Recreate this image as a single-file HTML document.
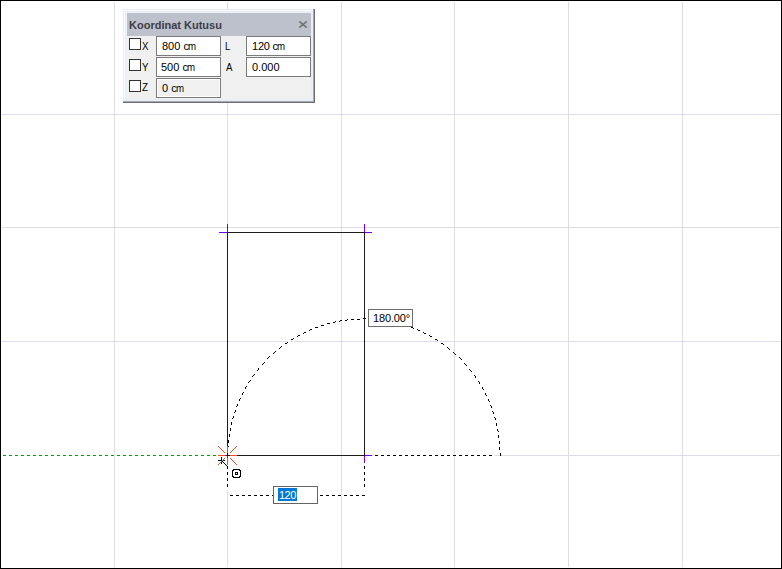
<!DOCTYPE html>
<html><head><meta charset="utf-8">
<style>
html,body{margin:0;padding:0;background:#fff;}
body{width:782px;height:569px;position:relative;overflow:hidden;font-family:"Liberation Sans",sans-serif;}
#cv{position:absolute;left:0;top:0;}
.dlg{position:absolute;left:123px;top:9px;width:192px;height:94px;}
.abs{position:absolute;}
.t{position:absolute;font-size:11px;line-height:11px;color:#000;white-space:nowrap;}
.tb{position:absolute;box-sizing:border-box;border:1px solid #7a7a7a;background:#fff;}
.m{display:inline-block;transform:scaleX(0.88);transform-origin:0 50%;}
.cb{position:absolute;box-sizing:border-box;width:12px;height:12px;border:1px solid #333;background:#fff;}
</style></head>
<body>
<svg id="cv" width="782" height="569" viewBox="0 0 782 569" shape-rendering="crispEdges">
<rect x="0" y="0" width="782" height="569" fill="#fff"/>
<path fill="#dcdceb" d="M114 2h1v565h-1zM227 2h1v565h-1zM341 2h1v565h-1zM454 2h1v565h-1zM568 2h1v565h-1zM682 2h1v565h-1zM2 114h778v1h-778zM2 227h778v1h-778zM2 341h778v1h-778zM2 455h778v1h-778z"/>
<path fill="#fff" d="M2 455h216v1h-216z"/>
<path fill="#00a000" d="M3 455h3v1h-3zM9 455h3v1h-3zM15 455h3v1h-3zM21 455h3v1h-3zM27 455h3v1h-3zM33 455h3v1h-3zM39 455h3v1h-3zM45 455h3v1h-3zM51 455h3v1h-3zM57 455h3v1h-3zM63 455h3v1h-3zM69 455h3v1h-3zM75 455h3v1h-3zM81 455h3v1h-3zM87 455h3v1h-3zM93 455h3v1h-3zM99 455h3v1h-3zM105 455h3v1h-3zM111 455h3v1h-3zM117 455h3v1h-3zM123 455h3v1h-3zM129 455h3v1h-3zM135 455h3v1h-3zM141 455h3v1h-3zM147 455h3v1h-3zM153 455h3v1h-3zM159 455h3v1h-3zM165 455h3v1h-3zM171 455h3v1h-3zM177 455h3v1h-3zM183 455h3v1h-3zM189 455h3v1h-3zM195 455h3v1h-3zM201 455h3v1h-3zM207 455h3v1h-3zM213 455h3v1h-3z"/>
<path fill="#fff" d="M500 455h1v1h-1zM500 454h1v1h-1zM500 453h1v1h-1zM500 452h1v1h-1zM500 451h1v1h-1zM499 450h1v1h-1zM499 449h1v1h-1zM499 448h1v1h-1zM499 447h1v1h-1zM499 446h1v1h-1zM499 445h1v1h-1zM499 444h1v1h-1zM499 443h1v1h-1zM499 442h1v1h-1zM499 441h1v1h-1zM499 440h1v1h-1zM499 439h1v1h-1zM499 438h1v1h-1zM498 437h1v1h-1zM498 436h1v1h-1zM498 435h1v1h-1zM498 434h1v1h-1zM498 433h1v1h-1zM498 432h1v1h-1zM498 431h1v1h-1zM497 430h1v1h-1zM497 429h1v1h-1zM497 428h1v1h-1zM497 427h1v1h-1zM497 426h1v1h-1zM496 425h1v1h-1zM496 424h1v1h-1zM496 423h1v1h-1zM496 422h1v1h-1zM495 421h1v1h-1zM495 420h1v1h-1zM495 419h1v1h-1zM495 418h1v1h-1zM494 417h1v1h-1zM494 416h1v1h-1zM494 415h1v1h-1zM493 414h1v1h-1zM493 413h1v1h-1zM493 412h1v1h-1zM492 411h1v1h-1zM492 410h1v1h-1zM492 409h1v1h-1zM491 408h1v1h-1zM491 407h1v1h-1zM491 406h1v1h-1zM490 405h1v1h-1zM490 404h1v1h-1zM489 403h1v1h-1zM489 402h1v1h-1zM489 401h1v1h-1zM488 400h1v1h-1zM488 399h1v1h-1zM487 398h1v1h-1zM487 397h1v1h-1zM486 396h1v1h-1zM486 395h1v1h-1zM485 394h1v1h-1zM485 393h1v1h-1zM484 392h1v1h-1zM484 391h1v1h-1zM483 390h1v1h-1zM483 389h1v1h-1zM482 388h1v1h-1zM482 387h1v1h-1zM481 386h1v1h-1zM481 385h1v1h-1zM480 384h1v1h-1zM479 383h1v1h-1zM479 382h1v1h-1zM478 381h1v1h-1zM477 380h1v1h-1zM477 379h1v1h-1zM476 378h1v1h-1zM475 377h1v1h-1zM475 376h1v1h-1zM474 375h1v1h-1zM473 374h1v1h-1zM473 373h1v1h-1zM472 372h1v1h-1zM471 371h1v1h-1zM470 370h1v1h-1zM469 369h1v1h-1zM469 368h1v1h-1zM468 367h1v1h-1zM467 366h1v1h-1zM466 365h1v1h-1zM465 364h1v1h-1zM464 363h1v1h-1zM463 362h1v1h-1zM463 361h1v1h-1zM462 360h1v1h-1zM461 359h1v1h-1zM460 358h1v1h-1zM459 357h1v1h-1zM458 356h1v1h-1zM457 355h1v1h-1zM456 355h1v1h-1zM455 354h1v1h-1zM454 353h1v1h-1zM453 352h1v1h-1zM452 351h1v1h-1zM451 350h1v1h-1zM450 349h1v1h-1zM449 349h1v1h-1zM448 348h1v1h-1zM447 347h1v1h-1zM446 346h1v1h-1zM445 345h1v1h-1zM444 345h1v1h-1zM443 344h1v1h-1zM442 343h1v1h-1zM441 343h1v1h-1zM440 342h1v1h-1zM439 341h1v1h-1zM438 341h1v1h-1zM437 340h1v1h-1zM436 339h1v1h-1zM435 339h1v1h-1zM434 338h1v1h-1zM433 337h1v1h-1zM432 337h1v1h-1zM431 336h1v1h-1zM430 336h1v1h-1zM429 335h1v1h-1zM428 335h1v1h-1zM427 334h1v1h-1zM426 334h1v1h-1zM425 333h1v1h-1zM424 333h1v1h-1zM423 332h1v1h-1zM422 332h1v1h-1zM421 331h1v1h-1zM420 331h1v1h-1zM419 330h1v1h-1zM418 330h1v1h-1zM417 329h1v1h-1zM416 329h1v1h-1zM415 329h1v1h-1zM414 328h1v1h-1zM413 328h1v1h-1zM412 327h1v1h-1zM411 327h1v1h-1zM410 327h1v1h-1zM409 326h1v1h-1zM408 326h1v1h-1zM407 326h1v1h-1zM406 325h1v1h-1zM405 325h1v1h-1zM404 325h1v1h-1zM403 324h1v1h-1zM402 324h1v1h-1zM401 324h1v1h-1zM400 323h1v1h-1zM399 323h1v1h-1zM398 323h1v1h-1zM397 323h1v1h-1zM396 322h1v1h-1zM395 322h1v1h-1zM394 322h1v1h-1zM393 322h1v1h-1zM392 321h1v1h-1zM391 321h1v1h-1zM390 321h1v1h-1zM389 321h1v1h-1zM388 321h1v1h-1zM387 320h1v1h-1zM386 320h1v1h-1zM385 320h1v1h-1zM384 320h1v1h-1zM383 320h1v1h-1zM382 320h1v1h-1zM381 320h1v1h-1zM380 319h1v1h-1zM379 319h1v1h-1zM378 319h1v1h-1zM377 319h1v1h-1zM376 319h1v1h-1zM375 319h1v1h-1zM374 319h1v1h-1zM373 319h1v1h-1zM372 319h1v1h-1zM371 319h1v1h-1zM370 319h1v1h-1zM369 319h1v1h-1zM368 319h1v1h-1zM367 318h1v1h-1zM366 318h1v1h-1zM365 318h1v1h-1zM364 318h1v1h-1zM363 318h1v1h-1zM362 318h1v1h-1zM361 318h1v1h-1zM360 318h1v1h-1zM359 319h1v1h-1zM358 319h1v1h-1zM357 319h1v1h-1zM356 319h1v1h-1zM355 319h1v1h-1zM354 319h1v1h-1zM353 319h1v1h-1zM352 319h1v1h-1zM351 319h1v1h-1zM350 319h1v1h-1zM349 319h1v1h-1zM348 319h1v1h-1zM347 319h1v1h-1zM346 320h1v1h-1zM345 320h1v1h-1zM344 320h1v1h-1zM343 320h1v1h-1zM342 320h1v1h-1zM341 320h1v1h-1zM340 320h1v1h-1zM339 321h1v1h-1zM338 321h1v1h-1zM337 321h1v1h-1zM336 321h1v1h-1zM335 321h1v1h-1zM334 322h1v1h-1zM333 322h1v1h-1zM332 322h1v1h-1zM331 322h1v1h-1zM330 323h1v1h-1zM329 323h1v1h-1zM328 323h1v1h-1zM327 323h1v1h-1zM326 324h1v1h-1zM325 324h1v1h-1zM324 324h1v1h-1zM323 325h1v1h-1zM322 325h1v1h-1zM321 325h1v1h-1zM320 326h1v1h-1zM319 326h1v1h-1zM318 326h1v1h-1zM317 327h1v1h-1zM316 327h1v1h-1zM315 327h1v1h-1zM314 328h1v1h-1zM313 328h1v1h-1zM312 329h1v1h-1zM311 329h1v1h-1zM310 329h1v1h-1zM309 330h1v1h-1zM308 330h1v1h-1zM307 331h1v1h-1zM306 331h1v1h-1zM305 332h1v1h-1zM304 332h1v1h-1zM303 333h1v1h-1zM302 333h1v1h-1zM301 334h1v1h-1zM300 334h1v1h-1zM299 335h1v1h-1zM298 335h1v1h-1zM297 336h1v1h-1zM296 336h1v1h-1zM295 337h1v1h-1zM294 337h1v1h-1zM293 338h1v1h-1zM292 339h1v1h-1zM291 339h1v1h-1zM290 340h1v1h-1zM289 341h1v1h-1zM288 341h1v1h-1zM287 342h1v1h-1zM286 343h1v1h-1zM285 343h1v1h-1zM284 344h1v1h-1zM283 345h1v1h-1zM282 345h1v1h-1zM281 346h1v1h-1zM280 347h1v1h-1zM279 348h1v1h-1zM278 349h1v1h-1zM277 349h1v1h-1zM276 350h1v1h-1zM275 351h1v1h-1zM274 352h1v1h-1zM273 353h1v1h-1zM272 354h1v1h-1zM271 355h1v1h-1zM270 355h1v1h-1zM269 356h1v1h-1zM268 357h1v1h-1zM267 358h1v1h-1zM266 359h1v1h-1zM265 360h1v1h-1zM264 361h1v1h-1zM264 362h1v1h-1zM263 363h1v1h-1zM262 364h1v1h-1zM261 365h1v1h-1zM260 366h1v1h-1zM259 367h1v1h-1zM258 368h1v1h-1zM258 369h1v1h-1zM257 370h1v1h-1zM256 371h1v1h-1zM255 372h1v1h-1zM254 373h1v1h-1zM254 374h1v1h-1zM253 375h1v1h-1zM252 376h1v1h-1zM252 377h1v1h-1zM251 378h1v1h-1zM250 379h1v1h-1zM250 380h1v1h-1zM249 381h1v1h-1zM248 382h1v1h-1zM248 383h1v1h-1zM247 384h1v1h-1zM246 385h1v1h-1zM246 386h1v1h-1zM245 387h1v1h-1zM245 388h1v1h-1zM244 389h1v1h-1zM244 390h1v1h-1zM243 391h1v1h-1zM243 392h1v1h-1zM242 393h1v1h-1zM242 394h1v1h-1zM241 395h1v1h-1zM241 396h1v1h-1zM240 397h1v1h-1zM240 398h1v1h-1zM239 399h1v1h-1zM239 400h1v1h-1zM238 401h1v1h-1zM238 402h1v1h-1zM238 403h1v1h-1zM237 404h1v1h-1zM237 405h1v1h-1zM236 406h1v1h-1zM236 407h1v1h-1zM236 408h1v1h-1zM235 409h1v1h-1zM235 410h1v1h-1zM235 411h1v1h-1zM234 412h1v1h-1zM234 413h1v1h-1zM234 414h1v1h-1zM233 415h1v1h-1zM233 416h1v1h-1zM233 417h1v1h-1zM232 418h1v1h-1zM232 419h1v1h-1zM232 420h1v1h-1zM232 421h1v1h-1zM231 422h1v1h-1zM231 423h1v1h-1zM231 424h1v1h-1zM231 425h1v1h-1zM230 426h1v1h-1zM230 427h1v1h-1zM230 428h1v1h-1zM230 429h1v1h-1zM230 430h1v1h-1zM229 431h1v1h-1zM229 432h1v1h-1zM229 433h1v1h-1zM229 434h1v1h-1zM229 435h1v1h-1zM229 436h1v1h-1zM229 437h1v1h-1zM228 438h1v1h-1zM228 439h1v1h-1zM228 440h1v1h-1zM228 441h1v1h-1zM228 442h1v1h-1zM228 443h1v1h-1zM228 444h1v1h-1zM228 445h1v1h-1zM228 446h1v1h-1z"/>
<path fill="#000" d="M500 455h1v1h-1zM500 454h1v1h-1zM500 453h1v1h-1zM499 449h1v1h-1zM499 448h1v1h-1zM499 447h1v1h-1zM499 443h1v1h-1zM499 442h1v1h-1zM499 441h1v1h-1zM498 437h1v1h-1zM498 436h1v1h-1zM498 435h1v1h-1zM498 431h1v1h-1zM497 430h1v1h-1zM497 429h1v1h-1zM496 425h1v1h-1zM496 424h1v1h-1zM496 423h1v1h-1zM495 419h1v1h-1zM495 418h1v1h-1zM494 417h1v1h-1zM493 413h1v1h-1zM493 412h1v1h-1zM492 411h1v1h-1zM491 407h1v1h-1zM491 406h1v1h-1zM490 405h1v1h-1zM489 401h1v1h-1zM488 400h1v1h-1zM488 399h1v1h-1zM486 395h1v1h-1zM485 394h1v1h-1zM485 393h1v1h-1zM483 389h1v1h-1zM482 388h1v1h-1zM482 387h1v1h-1zM479 383h1v1h-1zM479 382h1v1h-1zM478 381h1v1h-1zM475 377h1v1h-1zM475 376h1v1h-1zM474 375h1v1h-1zM471 371h1v1h-1zM470 370h1v1h-1zM469 369h1v1h-1zM466 365h1v1h-1zM465 364h1v1h-1zM464 363h1v1h-1zM461 359h1v1h-1zM460 358h1v1h-1zM459 357h1v1h-1zM455 354h1v1h-1zM454 353h1v1h-1zM453 352h1v1h-1zM449 349h1v1h-1zM448 348h1v1h-1zM447 347h1v1h-1zM443 344h1v1h-1zM442 343h1v1h-1zM441 343h1v1h-1zM437 340h1v1h-1zM436 339h1v1h-1zM435 339h1v1h-1zM431 336h1v1h-1zM430 336h1v1h-1zM429 335h1v1h-1zM425 333h1v1h-1zM424 333h1v1h-1zM423 332h1v1h-1zM419 330h1v1h-1zM418 330h1v1h-1zM417 329h1v1h-1zM413 328h1v1h-1zM412 327h1v1h-1zM411 327h1v1h-1zM407 326h1v1h-1zM406 325h1v1h-1zM405 325h1v1h-1zM401 324h1v1h-1zM400 323h1v1h-1zM399 323h1v1h-1zM395 322h1v1h-1zM394 322h1v1h-1zM393 322h1v1h-1zM389 321h1v1h-1zM388 321h1v1h-1zM387 320h1v1h-1zM383 320h1v1h-1zM382 320h1v1h-1zM381 320h1v1h-1zM377 319h1v1h-1zM376 319h1v1h-1zM375 319h1v1h-1zM371 319h1v1h-1zM370 319h1v1h-1zM369 319h1v1h-1zM365 318h1v1h-1zM364 318h1v1h-1zM363 318h1v1h-1zM359 319h1v1h-1zM358 319h1v1h-1zM357 319h1v1h-1zM353 319h1v1h-1zM352 319h1v1h-1zM351 319h1v1h-1zM347 319h1v1h-1zM346 320h1v1h-1zM345 320h1v1h-1zM341 320h1v1h-1zM340 320h1v1h-1zM339 321h1v1h-1zM335 321h1v1h-1zM334 322h1v1h-1zM333 322h1v1h-1zM329 323h1v1h-1zM328 323h1v1h-1zM327 323h1v1h-1zM323 325h1v1h-1zM322 325h1v1h-1zM321 325h1v1h-1zM317 327h1v1h-1zM316 327h1v1h-1zM315 327h1v1h-1zM311 329h1v1h-1zM310 329h1v1h-1zM309 330h1v1h-1zM305 332h1v1h-1zM304 332h1v1h-1zM303 333h1v1h-1zM299 335h1v1h-1zM298 335h1v1h-1zM297 336h1v1h-1zM293 338h1v1h-1zM292 339h1v1h-1zM291 339h1v1h-1zM287 342h1v1h-1zM286 343h1v1h-1zM285 343h1v1h-1zM281 346h1v1h-1zM280 347h1v1h-1zM279 348h1v1h-1zM275 351h1v1h-1zM274 352h1v1h-1zM273 353h1v1h-1zM269 356h1v1h-1zM268 357h1v1h-1zM267 358h1v1h-1zM264 362h1v1h-1zM263 363h1v1h-1zM262 364h1v1h-1zM258 368h1v1h-1zM258 369h1v1h-1zM257 370h1v1h-1zM254 374h1v1h-1zM253 375h1v1h-1zM252 376h1v1h-1zM250 380h1v1h-1zM249 381h1v1h-1zM248 382h1v1h-1zM246 386h1v1h-1zM245 387h1v1h-1zM245 388h1v1h-1zM243 392h1v1h-1zM242 393h1v1h-1zM242 394h1v1h-1zM240 398h1v1h-1zM239 399h1v1h-1zM239 400h1v1h-1zM237 404h1v1h-1zM237 405h1v1h-1zM236 406h1v1h-1zM235 410h1v1h-1zM235 411h1v1h-1zM234 412h1v1h-1zM233 416h1v1h-1zM233 417h1v1h-1zM232 418h1v1h-1zM231 422h1v1h-1zM231 423h1v1h-1zM231 424h1v1h-1zM230 428h1v1h-1zM230 429h1v1h-1zM230 430h1v1h-1zM229 434h1v1h-1zM229 435h1v1h-1zM229 436h1v1h-1zM228 440h1v1h-1zM228 441h1v1h-1zM228 442h1v1h-1zM228 446h1v1h-1z"/>
<path fill="#fff" d="M373 455h122v1h-122z"/>
<path fill="#000" d="M375 455h3v1h-3zM381 455h3v1h-3zM387 455h3v1h-3zM393 455h3v1h-3zM399 455h3v1h-3zM405 455h3v1h-3zM411 455h3v1h-3zM417 455h3v1h-3zM423 455h3v1h-3zM429 455h3v1h-3zM435 455h3v1h-3zM441 455h3v1h-3zM447 455h3v1h-3zM453 455h3v1h-3zM459 455h3v1h-3zM465 455h3v1h-3zM471 455h3v1h-3zM477 455h3v1h-3zM483 455h3v1h-3zM489 455h3v1h-3z"/>
<path fill="#1c1c1c" d="M227 232h138v1h-138zM227 455h138v1h-138zM227 232h1v224h-1zM364 232h1v224h-1z"/>
<path fill="#fff" d="M227 456h1v34h-1z"/>
<path fill="#000" d="M227 456h1v1h-1zM227 460h1v3h-1zM227 466h1v3h-1zM227 472h1v3h-1zM227 478h1v3h-1zM227 484h1v3h-1z"/>
<path fill="#fff" d="M364 456h1v34h-1z"/>
<path fill="#000" d="M364 456h1v1h-1zM364 460h1v3h-1zM364 466h1v3h-1zM364 472h1v3h-1zM364 478h1v3h-1zM364 484h1v3h-1z"/>
<path fill="#fff" d="M230 495h43v1h-43z"/>
<path fill="#000" d="M230 495h3v1h-3zM236 495h3v1h-3zM242 495h3v1h-3zM248 495h3v1h-3zM254 495h3v1h-3zM260 495h3v1h-3zM266 495h3v1h-3zM272 495h1v1h-1z"/>
<path fill="#fff" d="M318 495h48v1h-48z"/>
<path fill="#000" d="M320 495h3v1h-3zM326 495h3v1h-3zM332 495h3v1h-3zM338 495h3v1h-3zM344 495h3v1h-3zM350 495h3v1h-3zM356 495h3v1h-3zM362 495h3v1h-3z"/>
<path fill="#7800f0" d="M227 224h1v8h-1zM219 232h8v1h-8zM364 224h1v8h-1zM365 232h7v1h-7zM365 455h7v1h-7zM364 456h1v7h-1zM219 455h8v1h-8zM227 456h1v8h-1z"/>
<path fill="#f0501e" d="M218 455h7v1h-7zM230 455h7v1h-7zM227 446h1v7h-1zM227 458h1v7h-1zM218 446h1v1h-1zM236 446h1v1h-1zM230 458h1v1h-1zM224 458h1v1h-1zM219 447h1v1h-1zM235 447h1v1h-1zM231 459h1v1h-1zM223 459h1v1h-1zM220 448h1v1h-1zM234 448h1v1h-1zM232 460h1v1h-1zM222 460h1v1h-1zM221 449h1v1h-1zM233 449h1v1h-1zM233 461h1v1h-1zM221 461h1v1h-1zM222 450h1v1h-1zM232 450h1v1h-1zM234 462h1v1h-1zM220 462h1v1h-1zM223 451h1v1h-1zM231 451h1v1h-1zM235 463h1v1h-1zM219 463h1v1h-1zM224 452h1v1h-1zM230 452h1v1h-1zM236 464h1v1h-1zM218 464h1v1h-1z"/>
<path fill="#000" d="M227 455h1v1h-1zM228 455h1v1h-1zM229 455h1v1h-1zM227 453h1v1h-1zM227 454h1v1h-1zM218 460h7v1h-7zM221 457h1v7h-1z"/>
<path fill="#00c8ff" d="M222 460h1v1h-1zM221 461h1v1h-1z"/>
<path fill="#000" d="M222 461h1v1h-1zM223 462h1v1h-1zM224 463h1v1h-1zM225 464h1v1h-1zM226 465h1v1h-1zM227 466h1v1h-1zM233 469h7v1h-7zM233 477h7v1h-7zM232 470h1v7h-1zM240 470h1v7h-1zM233 470h1v1h-1zM239 470h1v1h-1zM233 476h1v1h-1zM239 476h1v1h-1zM235 472h3v1h-3zM235 474h3v1h-3zM235 473h1v1h-1zM237 473h1v1h-1zM0 0h782v1h-782zM0 568h782v1h-782zM0 0h1v569h-1zM781 0h1v569h-1z"/>
</svg>

<!-- angle label -->
<div class="tb" style="left:368px;top:309px;width:45px;height:18px;border-color:#6e6e6e;"></div>
<div class="t" style="left:373px;top:313px;letter-spacing:-0.15px;">180.00°</div>

<!-- length input -->
<div class="tb" style="left:273px;top:486px;width:45px;height:18px;border-color:#646464;"></div>
<div class="abs" style="left:278px;top:488px;width:19px;height:13px;background:#0078d7;"></div>
<div class="t" style="left:279px;top:490px;color:#fff;letter-spacing:-0.5px;">120</div>

<!-- dialog -->
<div class="dlg">
  <div class="abs" style="left:0;top:0;width:192px;height:94px;background:#e4eaf6;"></div>
  <div class="abs" style="left:1px;top:1px;width:188px;height:90px;background:#ffffff;"></div>
  <div class="abs" style="left:2px;top:2px;width:187px;height:89px;background:#e4eaf6;"></div>
  <div class="abs" style="left:3px;top:3px;width:186px;height:88px;background:#eef2fa;"></div>
  <div class="abs" style="left:191px;top:0;width:1px;height:94px;background:#6e6e6e;"></div>
  <div class="abs" style="left:0;top:93px;width:192px;height:1px;background:#6e6e6e;"></div>
  <div class="abs" style="left:190px;top:0;width:1px;height:93px;background:#a4a8b0;"></div>
  <div class="abs" style="left:0;top:92px;width:191px;height:1px;background:#a4a8b0;"></div>
  <div class="abs" style="left:188px;top:1px;width:2px;height:91px;background:#e8edf8;"></div>
  <div class="abs" style="left:1px;top:90px;width:189px;height:2px;background:#e8edf8;"></div>
  <div class="abs" style="left:4px;top:4px;width:184px;height:23px;background:#bcc1cb;"></div>
  <div class="abs" style="left:4px;top:27px;width:184px;height:63px;background:#f0f0f0;"></div>
  <div class="t" style="left:6px;top:11px;font-weight:bold;color:#3c3c46;">Koordinat Kutusu</div>
  <svg class="abs" style="left:176px;top:12px;" width="8" height="7" viewBox="0 0 8 7"><path d="M0.3 0.4 L7.7 6.6 M7.7 0.4 L0.3 6.6" stroke="#707070" stroke-width="1.5" fill="none"/></svg>
</div>
<!-- dialog controls, page coords -->
<div class="cb" style="left:129px;top:38px;"></div>
<div class="t" style="left:141.5px;top:41px;transform:scaleX(0.88);transform-origin:0 0;">X</div>
<div class="tb" style="left:156px;top:36px;width:65px;height:20px;"></div>
<div class="t" style="left:162px;top:41px;">800 <span style="letter-spacing:-0.8px">c</span><span class="m">m</span></div>
<div class="t" style="left:225px;top:41px;transform:scaleX(0.85);transform-origin:0 0;">L</div>
<div class="tb" style="left:246px;top:36px;width:65px;height:20px;"></div>
<div class="t" style="left:252px;top:41px;letter-spacing:-0.2px;">120 <span style="letter-spacing:-0.8px">c</span><span class="m">m</span></div>

<div class="cb" style="left:129px;top:59px;"></div>
<div class="t" style="left:141.5px;top:62px;transform:scaleX(0.88);transform-origin:0 0;">Y</div>
<div class="tb" style="left:156px;top:57px;width:65px;height:20px;"></div>
<div class="t" style="left:161px;top:62px;">500 <span style="letter-spacing:-0.8px">c</span><span class="m">m</span></div>
<div class="t" style="left:225.5px;top:62px;transform:scaleX(0.88);transform-origin:0 0;">A</div>
<div class="tb" style="left:246px;top:57px;width:65px;height:20px;"></div>
<div class="t" style="left:252px;top:62px;">0.000</div>

<div class="cb" style="left:129px;top:80px;"></div>
<div class="t" style="left:141.5px;top:82px;transform:scaleX(0.9);transform-origin:0 0;">Z</div>
<div class="tb" style="left:156px;top:78px;width:65px;height:20px;background:#f0f0f0;box-shadow:inset 0 0 0 1px #fff;"></div>
<div class="t" style="left:162px;top:83px;">0 <span style="letter-spacing:-0.8px">c</span><span class="m">m</span></div>
</body></html>
